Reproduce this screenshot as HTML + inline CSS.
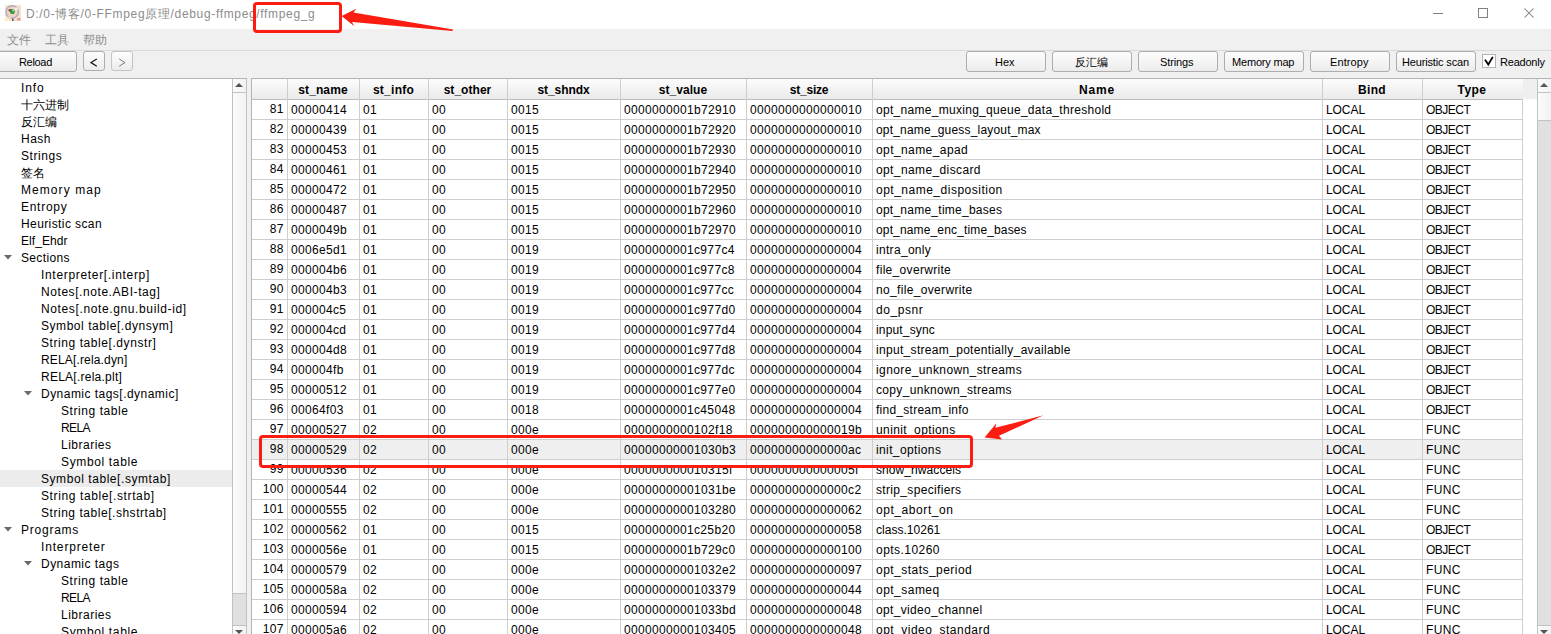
<!DOCTYPE html><html><head><meta charset="utf-8"><style>
*{margin:0;padding:0;box-sizing:border-box}
html,body{width:1551px;height:634px;overflow:hidden;background:#f0f0f0;font-family:"Liberation Sans",sans-serif;font-size:12px;color:#000}
.a{position:absolute}
.t{position:absolute;white-space:nowrap}
.btn{position:absolute;border:1px solid #adadad;border-radius:3px;background:linear-gradient(#fdfdfd,#ececec)}
.bt{position:absolute;white-space:nowrap;font-size:11px;line-height:14px}
.hc{position:absolute;top:82px;white-space:nowrap;font-weight:bold;line-height:16px}
.c{position:absolute;white-space:nowrap;line-height:20px}
.tr{position:absolute;white-space:nowrap;line-height:17px}
</style></head><body>

<div class="a" style="left:0;top:0;width:1551px;height:29px;background:#fff"></div>
<svg class="a" style="left:5px;top:5px" width="16" height="16" viewBox="0 0 16 16">
<rect x="0" y="0" width="16" height="16" fill="#f4e4c4"/>
<rect x="0" y="10" width="5" height="6" fill="#f8ecc0"/>
<circle cx="7.2" cy="6.9" r="6.2" fill="#f2d2c2" stroke="#b2aac8" stroke-width="1.5"/>
<path d="M2 9.5 Q4 12.5 7 12.8 L4.5 13 Z" fill="#f4f0f4"/>
<circle cx="11" cy="4" r="1.8" fill="#f6eef0"/>
<ellipse cx="7.4" cy="6.5" rx="2.5" ry="2.6" fill="#3a9e3a"/>
<path d="M3.2 5.5 Q4.2 3.6 6 4.2 L5.6 6.6 Q4.2 6.8 3.2 5.5Z" fill="#6a4a3a"/>
<circle cx="8.4" cy="5.4" r="0.9" fill="#b8ecc8"/>
<rect x="7" y="13.6" width="1.6" height="2.4" fill="#6a5a80"/>
<rect x="12" y="13" width="3.5" height="2.5" fill="#e49a9a"/>
</svg>
<div class="t" style="left:26px;top:6px;line-height:17px;color:#8c8c8c;letter-spacing:0.66px">D:/0-博客/0-FFmpeg原理/debug-ffmpeg/ffmpeg_g</div>
<div class="a" style="left:1433px;top:13px;width:10px;height:1px;background:#808080"></div>
<div class="a" style="left:1478px;top:8px;width:10px;height:10px;border:1px solid #808080"></div>
<svg class="a" style="left:1524px;top:8px" width="10" height="10"><path d="M0.5 0.5L9.5 9.5M9.5 0.5L0.5 9.5" stroke="#7a7a7a" stroke-width="1.05"/></svg>
<div class="t" style="left:7px;top:32px;line-height:17px;color:#8e8e8e">文件</div>
<div class="t" style="left:45px;top:32px;line-height:17px;color:#8e8e8e">工具</div>
<div class="t" style="left:83px;top:32px;line-height:17px;color:#8e8e8e">帮助</div>
<div class="a" style="left:0;top:50px;width:1551px;height:1px;background:#dadada"></div>
<div class="btn" style="left:-3px;top:51px;width:80px;height:21px;border-color:#adadad"></div>
<div class="bt" style="left:19px;top:55px;color:#000;letter-spacing:-0.32px">Reload</div>
<div class="btn" style="left:83px;top:51px;width:22px;height:20px"></div>
<svg class="a" style="left:90px;top:58px" width="8" height="9"><path d="M6.8 1L1 4.6L6.8 8.2" fill="none" stroke="#111" stroke-width="1.2"/></svg>
<div class="btn" style="left:111px;top:51px;width:22px;height:20px;border-color:#c4c4c4"></div>
<svg class="a" style="left:118px;top:58px" width="8" height="9"><path d="M1.2 1L7 4.6L1.2 8.2" fill="none" stroke="#7a7a7a" stroke-width="1"/></svg>
<div class="btn" style="left:966px;top:51px;width:80px;height:21px;border-color:#adadad"></div>
<div class="bt" style="left:995px;top:55px;color:#000;letter-spacing:0.0px">Hex</div>
<div class="btn" style="left:1052px;top:51px;width:80px;height:21px;border-color:#adadad"></div>
<div class="bt" style="left:1075px;top:55px;color:#000;letter-spacing:-0.15px">反汇编</div>
<div class="btn" style="left:1138px;top:51px;width:80px;height:21px;border-color:#adadad"></div>
<div class="bt" style="left:1160px;top:55px;color:#000;letter-spacing:-0.133px">Strings</div>
<div class="btn" style="left:1224px;top:51px;width:80px;height:21px;border-color:#adadad"></div>
<div class="bt" style="left:1232px;top:55px;color:#000;letter-spacing:-0.189px">Memory map</div>
<div class="btn" style="left:1310px;top:51px;width:80px;height:21px;border-color:#adadad"></div>
<div class="bt" style="left:1330px;top:55px;color:#000;letter-spacing:0.1px">Entropy</div>
<div class="btn" style="left:1396px;top:51px;width:80px;height:21px;border-color:#adadad"></div>
<div class="bt" style="left:1402px;top:55px;color:#000;letter-spacing:-0.154px">Heuristic scan</div>
<div class="a" style="left:1482px;top:54px;width:14px;height:14px;border:1px solid #b4b4b4;background:#fff"></div>
<svg class="a" style="left:1484px;top:56px" width="11" height="11"><path d="M1.4 4.2L4.3 8.5L8.5 1.4" fill="none" stroke="#000" stroke-width="1.8" stroke-linecap="round"/></svg>
<div class="bt" style="left:1500px;top:55px;letter-spacing:-0.214px">Readonly</div>
<div class="a" style="left:0;top:78px;width:247px;height:556px;background:#fff;border-top:1px solid #b4b4b4"></div>
<div class="tr" style="left:21px;top:80px;letter-spacing:0.867px">Info</div>
<div class="tr" style="left:21px;top:97px;letter-spacing:0px">十六进制</div>
<div class="tr" style="left:21px;top:114px;letter-spacing:0px">反汇编</div>
<div class="tr" style="left:21px;top:131px;letter-spacing:0.5px">Hash</div>
<div class="tr" style="left:21px;top:148px;letter-spacing:0.567px">Strings</div>
<div class="tr" style="left:21px;top:165px;letter-spacing:0px">签名</div>
<div class="tr" style="left:21px;top:182px;letter-spacing:1.067px">Memory map</div>
<div class="tr" style="left:21px;top:199px;letter-spacing:0.717px">Entropy</div>
<div class="tr" style="left:21px;top:216px;letter-spacing:0.4px">Heuristic scan</div>
<div class="tr" style="left:21px;top:233px;letter-spacing:0.057px">Elf_Ehdr</div>
<svg class="a" style="left:4px;top:255px" width="9" height="5"><path d="M0 0H8L4 4.5Z" fill="#6a6a6a"/></svg>
<div class="tr" style="left:21px;top:250px;letter-spacing:0.343px">Sections</div>
<div class="tr" style="left:41px;top:267px;letter-spacing:0.679px">Interpreter[.interp]</div>
<div class="tr" style="left:41px;top:284px;letter-spacing:0.568px">Notes[.note.ABI-tag]</div>
<div class="tr" style="left:41px;top:301px;letter-spacing:0.625px">Notes[.note.gnu.build-id]</div>
<div class="tr" style="left:41px;top:318px;letter-spacing:0.55px">Symbol table[.dynsym]</div>
<div class="tr" style="left:41px;top:335px;letter-spacing:0.57px">String table[.dynstr]</div>
<div class="tr" style="left:41px;top:352px;letter-spacing:0.157px">RELA[.rela.dyn]</div>
<div class="tr" style="left:41px;top:369px;letter-spacing:0.25px">RELA[.rela.plt]</div>
<svg class="a" style="left:24px;top:391px" width="9" height="5"><path d="M0 0H8L4 4.5Z" fill="#6a6a6a"/></svg>
<div class="tr" style="left:41px;top:386px;letter-spacing:0.471px">Dynamic tags[.dynamic]</div>
<div class="tr" style="left:61px;top:403px;letter-spacing:0.564px">String table</div>
<div class="tr" style="left:61px;top:420px;letter-spacing:-0.6px">RELA</div>
<div class="tr" style="left:61px;top:437px;letter-spacing:0.5px">Libraries</div>
<div class="tr" style="left:61px;top:454px;letter-spacing:0.645px">Symbol table</div>
<div class="a" style="left:0;top:470px;width:232px;height:17px;background:#ececec"></div>
<div class="tr" style="left:41px;top:471px;letter-spacing:0.56px">Symbol table[.symtab]</div>
<div class="tr" style="left:41px;top:488px;letter-spacing:0.615px">String table[.strtab]</div>
<div class="tr" style="left:41px;top:505px;letter-spacing:0.536px">String table[.shstrtab]</div>
<svg class="a" style="left:4px;top:527px" width="9" height="5"><path d="M0 0H8L4 4.5Z" fill="#6a6a6a"/></svg>
<div class="tr" style="left:21px;top:522px;letter-spacing:0.757px">Programs</div>
<div class="tr" style="left:41px;top:539px;letter-spacing:0.84px">Interpreter</div>
<svg class="a" style="left:24px;top:561px" width="9" height="5"><path d="M0 0H8L4 4.5Z" fill="#6a6a6a"/></svg>
<div class="tr" style="left:41px;top:556px;letter-spacing:0.473px">Dynamic tags</div>
<div class="tr" style="left:61px;top:573px;letter-spacing:0.564px">String table</div>
<div class="tr" style="left:61px;top:590px;letter-spacing:-0.6px">RELA</div>
<div class="tr" style="left:61px;top:607px;letter-spacing:0.5px">Libraries</div>
<div class="tr" style="left:61px;top:624px;letter-spacing:0.645px">Symbol table</div>
<div class="a" style="left:232px;top:79px;width:15px;height:555px;background:linear-gradient(90deg,#fbfbfb,#f2f2f2);border-left:1px solid #c2c2c2;border-right:1px solid #c2c2c2"></div>
<div class="a" style="left:233px;top:92px;width:13px;height:1px;background:#c2c2c2"></div>
<svg class="a" style="left:235px;top:83px" width="8" height="4"><path d="M0 4H8L4 0Z" fill="#555"/></svg>
<div class="a" style="left:233px;top:593px;width:13px;height:33px;background:#e0e0e0;border-top:1px solid #c2c2c2;border-bottom:1px solid #c2c2c2"></div>
<svg class="a" style="left:235px;top:630px" width="8" height="4"><path d="M0 0H8L4 4Z" fill="#555"/></svg>
<div class="a" style="left:251px;top:78px;width:1300px;height:556px;background:#fff;border-left:1px solid #b4b4b4;border-top:1px solid #b4b4b4"></div>
<div class="a" style="left:252px;top:79px;width:1285px;height:20px;background:#efefef"></div>
<div class="a" style="left:252px;top:79px;width:1271px;height:20px;background:linear-gradient(#fcfcfc,#eaeaea)"></div>
<div class="a" style="left:252px;top:99px;width:1271px;height:1px;background:#bdbdbd"></div>
<div class="a" style="left:252px;top:119px;width:1271px;height:1px;background:#cecece"></div>
<div class="c" style="right:1267.5px;top:99px;letter-spacing:0.33px;margin-right:-0.33px">81</div>
<div class="c" style="left:291px;top:100px;letter-spacing:0.343px">00000414</div>
<div class="c" style="left:363px;top:100px;letter-spacing:0.33px">01</div>
<div class="c" style="left:432px;top:100px;letter-spacing:0.33px">00</div>
<div class="c" style="left:511px;top:100px;letter-spacing:0.33px">0015</div>
<div class="c" style="left:624px;top:100px;letter-spacing:0.333px">0000000001b72910</div>
<div class="c" style="left:750px;top:100px;letter-spacing:0.33px">0000000000000010</div>
<div class="c" style="left:876px;top:100px;letter-spacing:0.291px">opt_name_muxing_queue_data_threshold</div>
<div class="c" style="left:1326px;top:100px;letter-spacing:-0.075px">LOCAL</div>
<div class="c" style="left:1426px;top:100px;letter-spacing:-0.5px">OBJECT</div>
<div class="a" style="left:252px;top:139px;width:1271px;height:1px;background:#cecece"></div>
<div class="c" style="right:1267.5px;top:119px;letter-spacing:0.33px;margin-right:-0.33px">82</div>
<div class="c" style="left:291px;top:120px;letter-spacing:0.33px">00000439</div>
<div class="c" style="left:363px;top:120px;letter-spacing:0.33px">01</div>
<div class="c" style="left:432px;top:120px;letter-spacing:0.33px">00</div>
<div class="c" style="left:511px;top:120px;letter-spacing:0.33px">0015</div>
<div class="c" style="left:624px;top:120px;letter-spacing:0.33px">0000000001b72920</div>
<div class="c" style="left:750px;top:120px;letter-spacing:0.33px">0000000000000010</div>
<div class="c" style="left:876px;top:120px;letter-spacing:0.188px">opt_name_guess_layout_max</div>
<div class="c" style="left:1326px;top:120px;letter-spacing:-0.075px">LOCAL</div>
<div class="c" style="left:1426px;top:120px;letter-spacing:-0.5px">OBJECT</div>
<div class="a" style="left:252px;top:159px;width:1271px;height:1px;background:#cecece"></div>
<div class="c" style="right:1267.5px;top:139px;letter-spacing:0.33px;margin-right:-0.33px">83</div>
<div class="c" style="left:291px;top:140px;letter-spacing:0.33px">00000453</div>
<div class="c" style="left:363px;top:140px;letter-spacing:0.33px">01</div>
<div class="c" style="left:432px;top:140px;letter-spacing:0.33px">00</div>
<div class="c" style="left:511px;top:140px;letter-spacing:0.33px">0015</div>
<div class="c" style="left:624px;top:140px;letter-spacing:0.33px">0000000001b72930</div>
<div class="c" style="left:750px;top:140px;letter-spacing:0.33px">0000000000000010</div>
<div class="c" style="left:876px;top:140px;letter-spacing:0.417px">opt_name_apad</div>
<div class="c" style="left:1326px;top:140px;letter-spacing:-0.075px">LOCAL</div>
<div class="c" style="left:1426px;top:140px;letter-spacing:-0.5px">OBJECT</div>
<div class="a" style="left:252px;top:179px;width:1271px;height:1px;background:#cecece"></div>
<div class="c" style="right:1267.5px;top:159px;letter-spacing:0.33px;margin-right:-0.33px">84</div>
<div class="c" style="left:291px;top:160px;letter-spacing:0.33px">00000461</div>
<div class="c" style="left:363px;top:160px;letter-spacing:0.33px">01</div>
<div class="c" style="left:432px;top:160px;letter-spacing:0.33px">00</div>
<div class="c" style="left:511px;top:160px;letter-spacing:0.33px">0015</div>
<div class="c" style="left:624px;top:160px;letter-spacing:0.33px">0000000001b72940</div>
<div class="c" style="left:750px;top:160px;letter-spacing:0.33px">0000000000000010</div>
<div class="c" style="left:876px;top:160px;letter-spacing:0.387px">opt_name_discard</div>
<div class="c" style="left:1326px;top:160px;letter-spacing:-0.075px">LOCAL</div>
<div class="c" style="left:1426px;top:160px;letter-spacing:-0.5px">OBJECT</div>
<div class="a" style="left:252px;top:199px;width:1271px;height:1px;background:#cecece"></div>
<div class="c" style="right:1267.5px;top:179px;letter-spacing:0.33px;margin-right:-0.33px">85</div>
<div class="c" style="left:291px;top:180px;letter-spacing:0.33px">00000472</div>
<div class="c" style="left:363px;top:180px;letter-spacing:0.33px">01</div>
<div class="c" style="left:432px;top:180px;letter-spacing:0.33px">00</div>
<div class="c" style="left:511px;top:180px;letter-spacing:0.33px">0015</div>
<div class="c" style="left:624px;top:180px;letter-spacing:0.33px">0000000001b72950</div>
<div class="c" style="left:750px;top:180px;letter-spacing:0.33px">0000000000000010</div>
<div class="c" style="left:876px;top:180px;letter-spacing:0.5px">opt_name_disposition</div>
<div class="c" style="left:1326px;top:180px;letter-spacing:-0.075px">LOCAL</div>
<div class="c" style="left:1426px;top:180px;letter-spacing:-0.5px">OBJECT</div>
<div class="a" style="left:252px;top:219px;width:1271px;height:1px;background:#cecece"></div>
<div class="c" style="right:1267.5px;top:199px;letter-spacing:0.33px;margin-right:-0.33px">86</div>
<div class="c" style="left:291px;top:200px;letter-spacing:0.33px">00000487</div>
<div class="c" style="left:363px;top:200px;letter-spacing:0.33px">01</div>
<div class="c" style="left:432px;top:200px;letter-spacing:0.33px">00</div>
<div class="c" style="left:511px;top:200px;letter-spacing:0.33px">0015</div>
<div class="c" style="left:624px;top:200px;letter-spacing:0.33px">0000000001b72960</div>
<div class="c" style="left:750px;top:200px;letter-spacing:0.33px">0000000000000010</div>
<div class="c" style="left:876px;top:200px;letter-spacing:0.25px">opt_name_time_bases</div>
<div class="c" style="left:1326px;top:200px;letter-spacing:-0.075px">LOCAL</div>
<div class="c" style="left:1426px;top:200px;letter-spacing:-0.5px">OBJECT</div>
<div class="a" style="left:252px;top:239px;width:1271px;height:1px;background:#cecece"></div>
<div class="c" style="right:1267.5px;top:219px;letter-spacing:0.33px;margin-right:-0.33px">87</div>
<div class="c" style="left:291px;top:220px;letter-spacing:0.33px">0000049b</div>
<div class="c" style="left:363px;top:220px;letter-spacing:0.33px">01</div>
<div class="c" style="left:432px;top:220px;letter-spacing:0.33px">00</div>
<div class="c" style="left:511px;top:220px;letter-spacing:0.33px">0015</div>
<div class="c" style="left:624px;top:220px;letter-spacing:0.33px">0000000001b72970</div>
<div class="c" style="left:750px;top:220px;letter-spacing:0.33px">0000000000000010</div>
<div class="c" style="left:876px;top:220px;letter-spacing:0.145px">opt_name_enc_time_bases</div>
<div class="c" style="left:1326px;top:220px;letter-spacing:-0.075px">LOCAL</div>
<div class="c" style="left:1426px;top:220px;letter-spacing:-0.5px">OBJECT</div>
<div class="a" style="left:252px;top:259px;width:1271px;height:1px;background:#cecece"></div>
<div class="c" style="right:1267.5px;top:239px;letter-spacing:0.33px;margin-right:-0.33px">88</div>
<div class="c" style="left:291px;top:240px;letter-spacing:0.33px">0006e5d1</div>
<div class="c" style="left:363px;top:240px;letter-spacing:0.33px">01</div>
<div class="c" style="left:432px;top:240px;letter-spacing:0.33px">00</div>
<div class="c" style="left:511px;top:240px;letter-spacing:0.33px">0019</div>
<div class="c" style="left:624px;top:240px;letter-spacing:0.33px">0000000001c977c4</div>
<div class="c" style="left:750px;top:240px;letter-spacing:0.33px">0000000000000004</div>
<div class="c" style="left:876px;top:240px;letter-spacing:0.311px">intra_only</div>
<div class="c" style="left:1326px;top:240px;letter-spacing:-0.075px">LOCAL</div>
<div class="c" style="left:1426px;top:240px;letter-spacing:-0.5px">OBJECT</div>
<div class="a" style="left:252px;top:279px;width:1271px;height:1px;background:#cecece"></div>
<div class="c" style="right:1267.5px;top:259px;letter-spacing:0.33px;margin-right:-0.33px">89</div>
<div class="c" style="left:291px;top:260px;letter-spacing:0.33px">000004b6</div>
<div class="c" style="left:363px;top:260px;letter-spacing:0.33px">01</div>
<div class="c" style="left:432px;top:260px;letter-spacing:0.33px">00</div>
<div class="c" style="left:511px;top:260px;letter-spacing:0.33px">0019</div>
<div class="c" style="left:624px;top:260px;letter-spacing:0.33px">0000000001c977c8</div>
<div class="c" style="left:750px;top:260px;letter-spacing:0.33px">0000000000000004</div>
<div class="c" style="left:876px;top:260px;letter-spacing:0.315px">file_overwrite</div>
<div class="c" style="left:1326px;top:260px;letter-spacing:-0.075px">LOCAL</div>
<div class="c" style="left:1426px;top:260px;letter-spacing:-0.5px">OBJECT</div>
<div class="a" style="left:252px;top:299px;width:1271px;height:1px;background:#cecece"></div>
<div class="c" style="right:1267.5px;top:279px;letter-spacing:0.33px;margin-right:-0.33px">90</div>
<div class="c" style="left:291px;top:280px;letter-spacing:0.33px">000004b3</div>
<div class="c" style="left:363px;top:280px;letter-spacing:0.33px">01</div>
<div class="c" style="left:432px;top:280px;letter-spacing:0.33px">00</div>
<div class="c" style="left:511px;top:280px;letter-spacing:0.33px">0019</div>
<div class="c" style="left:624px;top:280px;letter-spacing:0.33px">0000000001c977cc</div>
<div class="c" style="left:750px;top:280px;letter-spacing:0.33px">0000000000000004</div>
<div class="c" style="left:876px;top:280px;letter-spacing:0.338px">no_file_overwrite</div>
<div class="c" style="left:1326px;top:280px;letter-spacing:-0.075px">LOCAL</div>
<div class="c" style="left:1426px;top:280px;letter-spacing:-0.5px">OBJECT</div>
<div class="a" style="left:252px;top:319px;width:1271px;height:1px;background:#cecece"></div>
<div class="c" style="right:1267.5px;top:299px;letter-spacing:0.33px;margin-right:-0.33px">91</div>
<div class="c" style="left:291px;top:300px;letter-spacing:0.33px">000004c5</div>
<div class="c" style="left:363px;top:300px;letter-spacing:0.33px">01</div>
<div class="c" style="left:432px;top:300px;letter-spacing:0.33px">00</div>
<div class="c" style="left:511px;top:300px;letter-spacing:0.33px">0019</div>
<div class="c" style="left:624px;top:300px;letter-spacing:0.33px">0000000001c977d0</div>
<div class="c" style="left:750px;top:300px;letter-spacing:0.33px">0000000000000004</div>
<div class="c" style="left:876px;top:300px;letter-spacing:0.567px">do_psnr</div>
<div class="c" style="left:1326px;top:300px;letter-spacing:-0.075px">LOCAL</div>
<div class="c" style="left:1426px;top:300px;letter-spacing:-0.5px">OBJECT</div>
<div class="a" style="left:252px;top:339px;width:1271px;height:1px;background:#cecece"></div>
<div class="c" style="right:1267.5px;top:319px;letter-spacing:0.33px;margin-right:-0.33px">92</div>
<div class="c" style="left:291px;top:320px;letter-spacing:0.33px">000004cd</div>
<div class="c" style="left:363px;top:320px;letter-spacing:0.33px">01</div>
<div class="c" style="left:432px;top:320px;letter-spacing:0.33px">00</div>
<div class="c" style="left:511px;top:320px;letter-spacing:0.33px">0019</div>
<div class="c" style="left:624px;top:320px;letter-spacing:0.33px">0000000001c977d4</div>
<div class="c" style="left:750px;top:320px;letter-spacing:0.33px">0000000000000004</div>
<div class="c" style="left:876px;top:320px;letter-spacing:0.167px">input_sync</div>
<div class="c" style="left:1326px;top:320px;letter-spacing:-0.075px">LOCAL</div>
<div class="c" style="left:1426px;top:320px;letter-spacing:-0.5px">OBJECT</div>
<div class="a" style="left:252px;top:359px;width:1271px;height:1px;background:#cecece"></div>
<div class="c" style="right:1267.5px;top:339px;letter-spacing:0.33px;margin-right:-0.33px">93</div>
<div class="c" style="left:291px;top:340px;letter-spacing:0.33px">000004d8</div>
<div class="c" style="left:363px;top:340px;letter-spacing:0.33px">01</div>
<div class="c" style="left:432px;top:340px;letter-spacing:0.33px">00</div>
<div class="c" style="left:511px;top:340px;letter-spacing:0.33px">0019</div>
<div class="c" style="left:624px;top:340px;letter-spacing:0.33px">0000000001c977d8</div>
<div class="c" style="left:750px;top:340px;letter-spacing:0.33px">0000000000000004</div>
<div class="c" style="left:876px;top:340px;letter-spacing:0.315px">input_stream_potentially_available</div>
<div class="c" style="left:1326px;top:340px;letter-spacing:-0.075px">LOCAL</div>
<div class="c" style="left:1426px;top:340px;letter-spacing:-0.5px">OBJECT</div>
<div class="a" style="left:252px;top:379px;width:1271px;height:1px;background:#cecece"></div>
<div class="c" style="right:1267.5px;top:359px;letter-spacing:0.33px;margin-right:-0.33px">94</div>
<div class="c" style="left:291px;top:360px;letter-spacing:0.33px">000004fb</div>
<div class="c" style="left:363px;top:360px;letter-spacing:0.33px">01</div>
<div class="c" style="left:432px;top:360px;letter-spacing:0.33px">00</div>
<div class="c" style="left:511px;top:360px;letter-spacing:0.33px">0019</div>
<div class="c" style="left:624px;top:360px;letter-spacing:0.33px">0000000001c977dc</div>
<div class="c" style="left:750px;top:360px;letter-spacing:0.33px">0000000000000004</div>
<div class="c" style="left:876px;top:360px;letter-spacing:0.395px">ignore_unknown_streams</div>
<div class="c" style="left:1326px;top:360px;letter-spacing:-0.075px">LOCAL</div>
<div class="c" style="left:1426px;top:360px;letter-spacing:-0.5px">OBJECT</div>
<div class="a" style="left:252px;top:399px;width:1271px;height:1px;background:#cecece"></div>
<div class="c" style="right:1267.5px;top:379px;letter-spacing:0.33px;margin-right:-0.33px">95</div>
<div class="c" style="left:291px;top:380px;letter-spacing:0.33px">00000512</div>
<div class="c" style="left:363px;top:380px;letter-spacing:0.33px">01</div>
<div class="c" style="left:432px;top:380px;letter-spacing:0.33px">00</div>
<div class="c" style="left:511px;top:380px;letter-spacing:0.33px">0019</div>
<div class="c" style="left:624px;top:380px;letter-spacing:0.33px">0000000001c977e0</div>
<div class="c" style="left:750px;top:380px;letter-spacing:0.33px">0000000000000004</div>
<div class="c" style="left:876px;top:380px;letter-spacing:0.326px">copy_unknown_streams</div>
<div class="c" style="left:1326px;top:380px;letter-spacing:-0.075px">LOCAL</div>
<div class="c" style="left:1426px;top:380px;letter-spacing:-0.5px">OBJECT</div>
<div class="a" style="left:252px;top:419px;width:1271px;height:1px;background:#cecece"></div>
<div class="c" style="right:1267.5px;top:399px;letter-spacing:0.33px;margin-right:-0.33px">96</div>
<div class="c" style="left:291px;top:400px;letter-spacing:0.33px">00064f03</div>
<div class="c" style="left:363px;top:400px;letter-spacing:0.33px">01</div>
<div class="c" style="left:432px;top:400px;letter-spacing:0.33px">00</div>
<div class="c" style="left:511px;top:400px;letter-spacing:0.33px">0018</div>
<div class="c" style="left:624px;top:400px;letter-spacing:0.33px">0000000001c45048</div>
<div class="c" style="left:750px;top:400px;letter-spacing:0.33px">0000000000000004</div>
<div class="c" style="left:876px;top:400px;letter-spacing:0.253px">find_stream_info</div>
<div class="c" style="left:1326px;top:400px;letter-spacing:-0.075px">LOCAL</div>
<div class="c" style="left:1426px;top:400px;letter-spacing:-0.5px">OBJECT</div>
<div class="a" style="left:252px;top:439px;width:1271px;height:1px;background:#cecece"></div>
<div class="c" style="right:1267.5px;top:419px;letter-spacing:0.33px;margin-right:-0.33px">97</div>
<div class="c" style="left:291px;top:420px;letter-spacing:0.33px">00000527</div>
<div class="c" style="left:363px;top:420px;letter-spacing:0.33px">02</div>
<div class="c" style="left:432px;top:420px;letter-spacing:0.33px">00</div>
<div class="c" style="left:511px;top:420px;letter-spacing:0.33px">000e</div>
<div class="c" style="left:624px;top:420px;letter-spacing:0.33px">0000000000102f18</div>
<div class="c" style="left:750px;top:420px;letter-spacing:0.33px">000000000000019b</div>
<div class="c" style="left:876px;top:420px;letter-spacing:0.392px">uninit_options</div>
<div class="c" style="left:1326px;top:420px;letter-spacing:-0.075px">LOCAL</div>
<div class="c" style="left:1426px;top:420px;letter-spacing:0.4px">FUNC</div>
<div class="a" style="left:252px;top:440px;width:1271px;height:19px;background:#efefef"></div>
<div class="a" style="left:252px;top:459px;width:1271px;height:1px;background:#cecece"></div>
<div class="c" style="right:1267.5px;top:439px;letter-spacing:0.33px;margin-right:-0.33px">98</div>
<div class="c" style="left:291px;top:440px;letter-spacing:0.33px">00000529</div>
<div class="c" style="left:363px;top:440px;letter-spacing:0.33px">02</div>
<div class="c" style="left:432px;top:440px;letter-spacing:0.33px">00</div>
<div class="c" style="left:511px;top:440px;letter-spacing:0.33px">000e</div>
<div class="c" style="left:624px;top:440px;letter-spacing:0.33px">00000000001030b3</div>
<div class="c" style="left:750px;top:440px;letter-spacing:0.33px">00000000000000ac</div>
<div class="c" style="left:876px;top:440px;letter-spacing:0.382px">init_options</div>
<div class="c" style="left:1326px;top:440px;letter-spacing:-0.075px">LOCAL</div>
<div class="c" style="left:1426px;top:440px;letter-spacing:0.4px">FUNC</div>
<div class="a" style="left:252px;top:479px;width:1271px;height:1px;background:#cecece"></div>
<div class="c" style="right:1267.5px;top:459px;letter-spacing:0.33px;margin-right:-0.33px">99</div>
<div class="c" style="left:291px;top:460px;letter-spacing:0.33px">00000536</div>
<div class="c" style="left:363px;top:460px;letter-spacing:0.33px">02</div>
<div class="c" style="left:432px;top:460px;letter-spacing:0.33px">00</div>
<div class="c" style="left:511px;top:460px;letter-spacing:0.33px">000e</div>
<div class="c" style="left:624px;top:460px;letter-spacing:0.33px">000000000010315f</div>
<div class="c" style="left:750px;top:460px;letter-spacing:0.33px">000000000000005f</div>
<div class="c" style="left:876px;top:460px;letter-spacing:0.083px">show_hwaccels</div>
<div class="c" style="left:1326px;top:460px;letter-spacing:-0.075px">LOCAL</div>
<div class="c" style="left:1426px;top:460px;letter-spacing:0.4px">FUNC</div>
<div class="a" style="left:252px;top:499px;width:1271px;height:1px;background:#cecece"></div>
<div class="c" style="right:1267.5px;top:479px;letter-spacing:0.33px;margin-right:-0.33px">100</div>
<div class="c" style="left:291px;top:480px;letter-spacing:0.33px">00000544</div>
<div class="c" style="left:363px;top:480px;letter-spacing:0.33px">02</div>
<div class="c" style="left:432px;top:480px;letter-spacing:0.33px">00</div>
<div class="c" style="left:511px;top:480px;letter-spacing:0.33px">000e</div>
<div class="c" style="left:624px;top:480px;letter-spacing:0.33px">00000000001031be</div>
<div class="c" style="left:750px;top:480px;letter-spacing:0.33px">00000000000000c2</div>
<div class="c" style="left:876px;top:480px;letter-spacing:0.333px">strip_specifiers</div>
<div class="c" style="left:1326px;top:480px;letter-spacing:-0.075px">LOCAL</div>
<div class="c" style="left:1426px;top:480px;letter-spacing:0.4px">FUNC</div>
<div class="a" style="left:252px;top:519px;width:1271px;height:1px;background:#cecece"></div>
<div class="c" style="right:1267.5px;top:499px;letter-spacing:0.33px;margin-right:-0.33px">101</div>
<div class="c" style="left:291px;top:500px;letter-spacing:0.33px">00000555</div>
<div class="c" style="left:363px;top:500px;letter-spacing:0.33px">02</div>
<div class="c" style="left:432px;top:500px;letter-spacing:0.33px">00</div>
<div class="c" style="left:511px;top:500px;letter-spacing:0.33px">000e</div>
<div class="c" style="left:624px;top:500px;letter-spacing:0.33px">0000000000103280</div>
<div class="c" style="left:750px;top:500px;letter-spacing:0.33px">0000000000000062</div>
<div class="c" style="left:876px;top:500px;letter-spacing:0.564px">opt_abort_on</div>
<div class="c" style="left:1326px;top:500px;letter-spacing:-0.075px">LOCAL</div>
<div class="c" style="left:1426px;top:500px;letter-spacing:0.4px">FUNC</div>
<div class="a" style="left:252px;top:539px;width:1271px;height:1px;background:#cecece"></div>
<div class="c" style="right:1267.5px;top:519px;letter-spacing:0.33px;margin-right:-0.33px">102</div>
<div class="c" style="left:291px;top:520px;letter-spacing:0.33px">00000562</div>
<div class="c" style="left:363px;top:520px;letter-spacing:0.33px">01</div>
<div class="c" style="left:432px;top:520px;letter-spacing:0.33px">00</div>
<div class="c" style="left:511px;top:520px;letter-spacing:0.33px">0015</div>
<div class="c" style="left:624px;top:520px;letter-spacing:0.33px">0000000001c25b20</div>
<div class="c" style="left:750px;top:520px;letter-spacing:0.33px">0000000000000058</div>
<div class="c" style="left:876px;top:520px;letter-spacing:0.02px">class.10261</div>
<div class="c" style="left:1326px;top:520px;letter-spacing:-0.075px">LOCAL</div>
<div class="c" style="left:1426px;top:520px;letter-spacing:-0.5px">OBJECT</div>
<div class="a" style="left:252px;top:559px;width:1271px;height:1px;background:#cecece"></div>
<div class="c" style="right:1267.5px;top:539px;letter-spacing:0.33px;margin-right:-0.33px">103</div>
<div class="c" style="left:291px;top:540px;letter-spacing:0.33px">0000056e</div>
<div class="c" style="left:363px;top:540px;letter-spacing:0.33px">01</div>
<div class="c" style="left:432px;top:540px;letter-spacing:0.33px">00</div>
<div class="c" style="left:511px;top:540px;letter-spacing:0.33px">0015</div>
<div class="c" style="left:624px;top:540px;letter-spacing:0.33px">0000000001b729c0</div>
<div class="c" style="left:750px;top:540px;letter-spacing:0.33px">0000000000000100</div>
<div class="c" style="left:876px;top:540px;letter-spacing:0.456px">opts.10260</div>
<div class="c" style="left:1326px;top:540px;letter-spacing:-0.075px">LOCAL</div>
<div class="c" style="left:1426px;top:540px;letter-spacing:-0.5px">OBJECT</div>
<div class="a" style="left:252px;top:579px;width:1271px;height:1px;background:#cecece"></div>
<div class="c" style="right:1267.5px;top:559px;letter-spacing:0.33px;margin-right:-0.33px">104</div>
<div class="c" style="left:291px;top:560px;letter-spacing:0.33px">00000579</div>
<div class="c" style="left:363px;top:560px;letter-spacing:0.33px">02</div>
<div class="c" style="left:432px;top:560px;letter-spacing:0.33px">00</div>
<div class="c" style="left:511px;top:560px;letter-spacing:0.33px">000e</div>
<div class="c" style="left:624px;top:560px;letter-spacing:0.33px">00000000001032e2</div>
<div class="c" style="left:750px;top:560px;letter-spacing:0.33px">0000000000000097</div>
<div class="c" style="left:876px;top:560px;letter-spacing:0.467px">opt_stats_period</div>
<div class="c" style="left:1326px;top:560px;letter-spacing:-0.075px">LOCAL</div>
<div class="c" style="left:1426px;top:560px;letter-spacing:0.4px">FUNC</div>
<div class="a" style="left:252px;top:599px;width:1271px;height:1px;background:#cecece"></div>
<div class="c" style="right:1267.5px;top:579px;letter-spacing:0.33px;margin-right:-0.33px">105</div>
<div class="c" style="left:291px;top:580px;letter-spacing:0.33px">0000058a</div>
<div class="c" style="left:363px;top:580px;letter-spacing:0.33px">02</div>
<div class="c" style="left:432px;top:580px;letter-spacing:0.33px">00</div>
<div class="c" style="left:511px;top:580px;letter-spacing:0.33px">000e</div>
<div class="c" style="left:624px;top:580px;letter-spacing:0.33px">0000000000103379</div>
<div class="c" style="left:750px;top:580px;letter-spacing:0.33px">0000000000000044</div>
<div class="c" style="left:876px;top:580px;letter-spacing:0.475px">opt_sameq</div>
<div class="c" style="left:1326px;top:580px;letter-spacing:-0.075px">LOCAL</div>
<div class="c" style="left:1426px;top:580px;letter-spacing:0.4px">FUNC</div>
<div class="a" style="left:252px;top:619px;width:1271px;height:1px;background:#cecece"></div>
<div class="c" style="right:1267.5px;top:599px;letter-spacing:0.33px;margin-right:-0.33px">106</div>
<div class="c" style="left:291px;top:600px;letter-spacing:0.33px">00000594</div>
<div class="c" style="left:363px;top:600px;letter-spacing:0.33px">02</div>
<div class="c" style="left:432px;top:600px;letter-spacing:0.33px">00</div>
<div class="c" style="left:511px;top:600px;letter-spacing:0.33px">000e</div>
<div class="c" style="left:624px;top:600px;letter-spacing:0.33px">00000000001033bd</div>
<div class="c" style="left:750px;top:600px;letter-spacing:0.33px">0000000000000048</div>
<div class="c" style="left:876px;top:600px;letter-spacing:0.338px">opt_video_channel</div>
<div class="c" style="left:1326px;top:600px;letter-spacing:-0.075px">LOCAL</div>
<div class="c" style="left:1426px;top:600px;letter-spacing:0.4px">FUNC</div>
<div class="a" style="left:252px;top:639px;width:1271px;height:1px;background:#cecece"></div>
<div class="c" style="right:1267.5px;top:619px;letter-spacing:0.33px;margin-right:-0.33px">107</div>
<div class="c" style="left:291px;top:620px;letter-spacing:0.33px">000005a6</div>
<div class="c" style="left:363px;top:620px;letter-spacing:0.33px">02</div>
<div class="c" style="left:432px;top:620px;letter-spacing:0.33px">00</div>
<div class="c" style="left:511px;top:620px;letter-spacing:0.33px">000e</div>
<div class="c" style="left:624px;top:620px;letter-spacing:0.33px">0000000000103405</div>
<div class="c" style="left:750px;top:620px;letter-spacing:0.33px">0000000000000048</div>
<div class="c" style="left:876px;top:620px;letter-spacing:0.482px">opt_video_standard</div>
<div class="c" style="left:1326px;top:620px;letter-spacing:-0.075px">LOCAL</div>
<div class="c" style="left:1426px;top:620px;letter-spacing:0.4px">FUNC</div>
<div class="a" style="left:287px;top:79px;width:1px;height:555px;background:#cecece"></div>
<div class="a" style="left:359px;top:79px;width:1px;height:555px;background:#cecece"></div>
<div class="a" style="left:428px;top:79px;width:1px;height:555px;background:#cecece"></div>
<div class="a" style="left:507px;top:79px;width:1px;height:555px;background:#cecece"></div>
<div class="a" style="left:620px;top:79px;width:1px;height:555px;background:#cecece"></div>
<div class="a" style="left:746px;top:79px;width:1px;height:555px;background:#cecece"></div>
<div class="a" style="left:872px;top:79px;width:1px;height:555px;background:#cecece"></div>
<div class="a" style="left:1322px;top:79px;width:1px;height:555px;background:#cecece"></div>
<div class="a" style="left:1422px;top:79px;width:1px;height:555px;background:#cecece"></div>
<div class="a" style="left:1522px;top:100px;width:1px;height:534px;background:#cecece"></div>
<div class="hc" style="left:287px;width:72px;text-align:center;letter-spacing:0.1px">st_name</div>
<div class="hc" style="left:359px;width:69px;text-align:center;letter-spacing:0.267px">st_info</div>
<div class="hc" style="left:428px;width:79px;text-align:center;letter-spacing:0.043px">st_other</div>
<div class="hc" style="left:507px;width:113px;text-align:center;letter-spacing:-0.071px">st_shndx</div>
<div class="hc" style="left:620px;width:126px;text-align:center;letter-spacing:0.043px">st_value</div>
<div class="hc" style="left:746px;width:126px;text-align:center;letter-spacing:-0.25px">st_size</div>
<div class="hc" style="left:872px;width:450px;text-align:center;letter-spacing:0.767px">Name</div>
<div class="hc" style="left:1322px;width:100px;text-align:center;letter-spacing:0.333px">Bind</div>
<div class="hc" style="left:1422px;width:100px;text-align:center;letter-spacing:0.433px">Type</div>
<div class="a" style="left:1537px;top:79px;width:14px;height:555px;background:linear-gradient(90deg,#fbfbfb,#f2f2f2);border-left:1px solid #c2c2c2"></div>
<div class="a" style="left:1538px;top:92px;width:13px;height:1px;background:#c2c2c2"></div>
<svg class="a" style="left:1540px;top:83px" width="8" height="4"><path d="M0 4H8L4 0Z" fill="#555"/></svg>
<div class="a" style="left:1538px;top:120px;width:13px;height:506px;background:#e0e0e0;border-top:1px solid #c2c2c2;border-bottom:1px solid #c2c2c2"></div>
<svg class="a" style="left:1540px;top:630px" width="8" height="4"><path d="M0 0H8L4 4Z" fill="#555"/></svg>
<div class="a" style="left:253px;top:2px;width:89px;height:31px;border:3px solid #fb1d12;border-radius:4px"></div>
<svg class="a" style="left:0;top:0" width="1551" height="634" viewBox="0 0 1551 634"><path d="M341.7 15.9L356.2 8.8L353.5 12.6L453 29.6L452.6 31L352 22L354.3 26.2Z" fill="#fb1d12"/><path d="M984.6 437.6L996.4 423.2L995.4 427.8L1043.5 415.3L999 435.8L1002 439.6Z" fill="#fb1d12"/></svg>
<div class="a" style="left:259px;top:435px;width:714px;height:33px;border:3px solid #fb1d12;border-radius:4px"></div>
</body></html>
